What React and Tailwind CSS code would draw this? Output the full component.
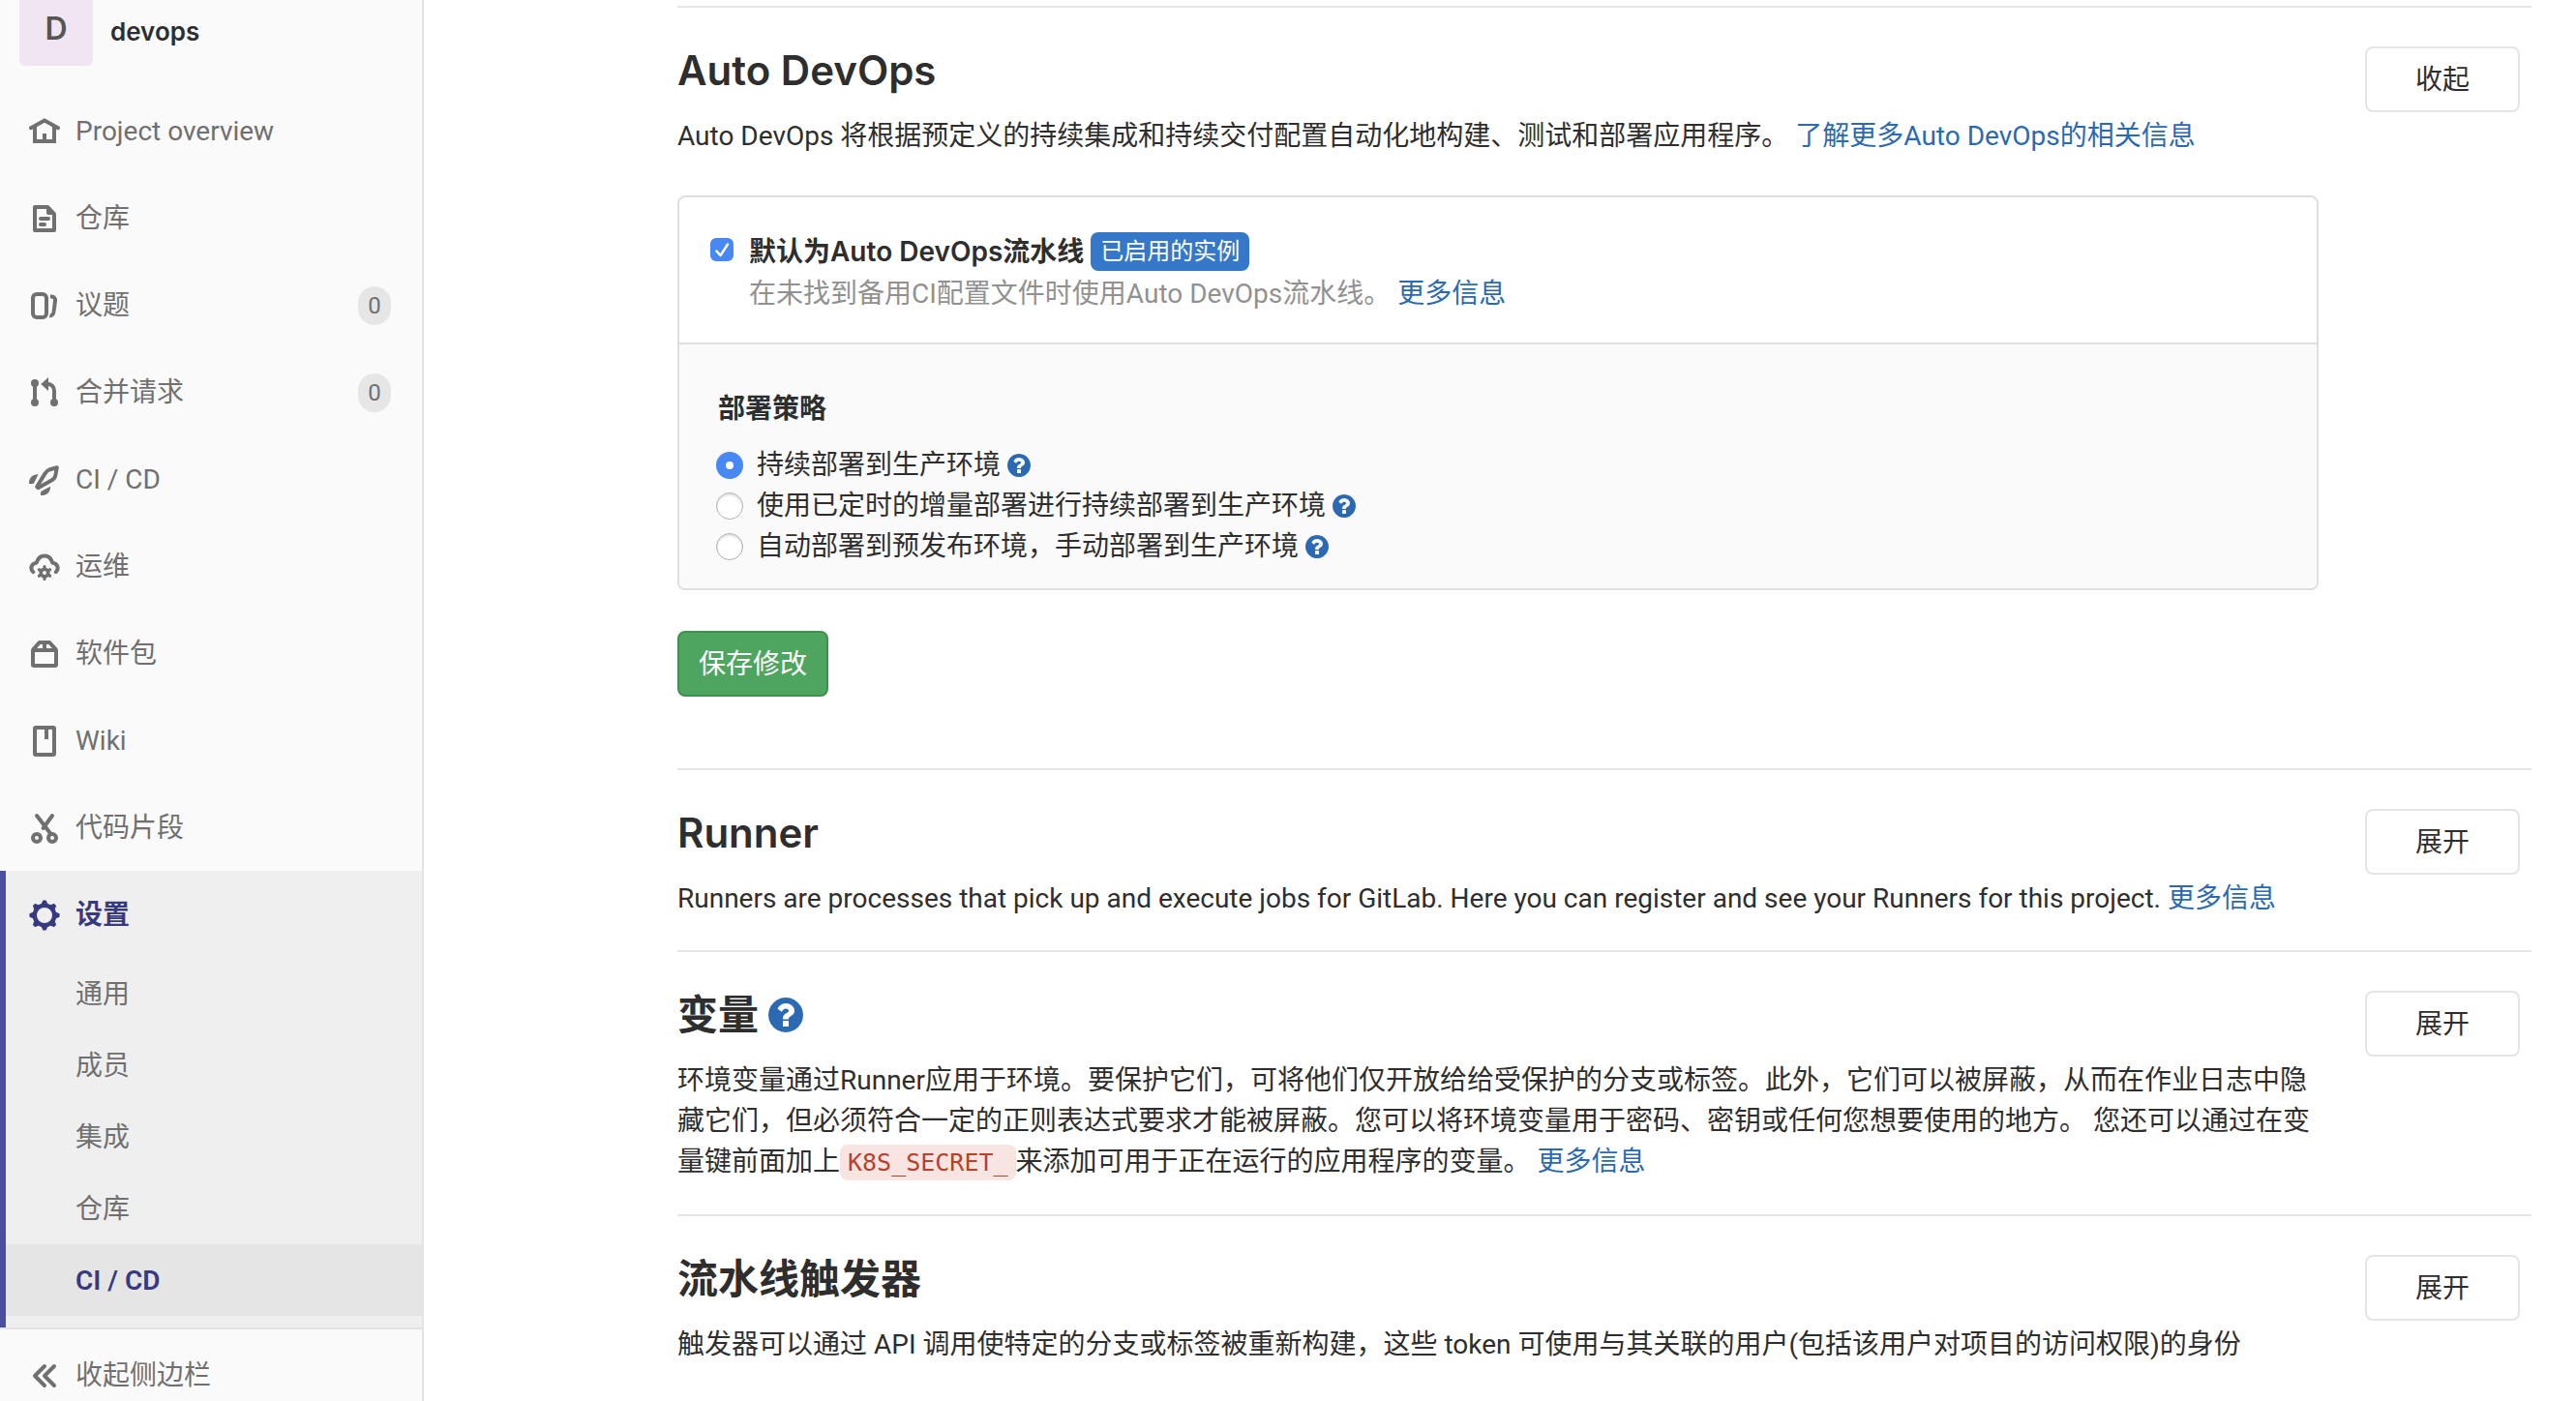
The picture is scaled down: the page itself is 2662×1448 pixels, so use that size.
import React, { useState } from "react";

const LINK = "text-[#2c69b3] hover:underline";

function Icon({ children, size = "size-8" }) {
  return (
    <svg
      viewBox="0 0 16 16"
      className={`${size} shrink-0`}
      fill="none"
      stroke="currentColor"
      strokeWidth="2"
      aria-hidden="true"
    >
      {children}
    </svg>
  );
}

const HomeIcon = () => (
  <Icon>
    <path d="M1 6.1 8 2.3l7 3.8" strokeLinecap="round" />
    <path d="M3 5.5V13h10V5.5" />
    <path d="M8 9v3.5" />
  </Icon>
);

const DocIcon = () => (
  <Icon>
    <path
      fill="currentColor"
      stroke="none"
      fillRule="evenodd"
      d="M3 1h6.6c.3 0 .5.1.7.3l3.4 3.6c.2.2.3.4.3.7V14a1 1 0 0 1-1 1H3a1 1 0 0 1-1-1V2a1 1 0 0 1 1-1zm1 2v10h8V6h-2a1 1 0 0 1-1-1V3z"
    />
    <path d="M6 8h4M6 11h2" strokeLinecap="round" />
  </Icon>
);

const IssuesIcon = () => (
  <Icon>
    <rect x="2" y="2" width="7" height="12" rx="2" />
    <path
      fill="currentColor"
      stroke="none"
      d="M11 2.200h.6a3 3 0 0 1 2.900 3.400l-.8 5.800a3 3 0 0 1-3 2.700h-.3l.6-2a1 1 0 0 0 .8-.9l.7-5.700a1 1 0 0 0-1-1.200H11z"
    />
  </Icon>
);

const MergeIcon = () => (
  <Icon>
    <path d="M3 3v10M9.500 3.500c2.200 0 3.500 1.300 3.500 3.500v6" />
    <g fill="currentColor" stroke="none">
      <circle cx="3" cy="3" r="2" />
      <circle cx="3" cy="13" r="2" />
      <circle cx="13" cy="13" r="2" />
      <path d="M6.100 3.500 10 0v7z" />
    </g>
  </Icon>
);

const RocketIcon = () => (
  <Icon>
    <path
      d="M14.400 1.600l-.7 3.900c-.2 1.200-1 2.200-2.100 2.800L4.700 12.100l-.6-.6L8.200 4.800c.6-1 1.500-1.800 2.600-2.200z"
      strokeLinejoin="round"
    />
    <g fill="currentColor" stroke="none">
      <path d="M0 10c-.1-2.900 1.600-5 4.800-4.900L2.700 9.400c-.2.400-.5.600-.9.600z" />
      <path d="M6 16c2.900.1 5.100-1.300 5-4.600l-4.400 2.300c-.4.200-.6.500-.6.900z" />
    </g>
  </Icon>
);

const CloudGearIcon = () => (
  <Icon>
    <path
      d="M2.100 10.600C.6 9.100.8 6.300 3.900 5.800 4.500 3.500 6 2.200 8 2.200s3.500 1.300 4.100 3.600c3.100.5 3.300 3.300 1.800 4.800"
      strokeLinecap="round"
      strokeLinejoin="round"
    />
    <circle cx="8" cy="11" r="1.900" strokeWidth="1.800" />
    <path
      d="M8 8.300v-.5M8 14.200v-.5M10.300 9.700l.5-.3M5.200 12.600l.5-.3M10.300 12.300l.5.3M5.200 9.400l.5.3"
      strokeWidth="1.600"
      strokeLinecap="round"
    />
  </Icon>
);

const PackageIcon = () => (
  <Icon>
    <path d="M2 6h12v7.500a.5.5 0 0 1-.5.5h-11a.5.5 0 0 1-.5-.5z" strokeLinejoin="round" />
    <path d="M2 5.800 5.400 2h5.200L14 5.800" strokeLinejoin="round" />
    <path d="M8 2v4" />
  </Icon>
);

const WikiIcon = () => (
  <Icon>
    <rect x="3" y="1" width="10" height="14" rx="0.500" />
    <path d="M9 2v5" />
  </Icon>
);

const ScissorsIcon = () => (
  <Icon>
    <path d="M4 1.500 11.300 11M12 1.500 7.300 8" strokeLinecap="round" />
    <circle cx="4" cy="13" r="2" />
    <circle cx="12" cy="13" r="2" />
  </Icon>
);

const SettingsIcon = () => (
  <Icon>
    <circle cx="8" cy="8" r="5.100" strokeWidth="2.200" />
    {[0, 45, 90, 135, 180, 225, 270, 315].map((a) => (
      <path
        key={a}
        d="M7.500.7h1l1 2.500h-3z"
        transform={`rotate(${a} 8 8)`}
        fill="currentColor"
        strokeWidth="1"
        strokeLinejoin="round"
      />
    ))}
  </Icon>
);

const ChevronsIcon = () => (
  <Icon>
    <path d="M8 3 3 8l5 5M13 3 8 8l5 5" strokeLinecap="round" strokeLinejoin="round" />
  </Icon>
);

function Help({ size = "size-6" }) {
  return (
    <a href="#help" aria-label="帮助" className="shrink-0 text-[#2c69b3]">
      <svg viewBox="128 128 1536 1536" className={size} fill="currentColor" aria-hidden="true">
        <path d="M1024 1376v-192q0-14-9-23t-23-9h-192q-14 0-23 9t-9 23v192q0 14 9 23t23 9h192q14 0 23-9t9-23zm256-672q0-88-55.500-163t-138.500-116-170-41q-243 0-371 213-15 24 8 42l132 100q7 6 19 6 16 0 25-12 53-68 86-92 34-24 86-24 48 0 85.500 26t37.500 59q0 38-20 61t-68 45q-63 28-115.500 86.500t-52.500 125.500v36q0 14 9 23t23 9h192q14 0 23-9t9-23q0-19 21.500-49.500t54.500-49.500q32-18 49-28.500t46-35 44.500-48 28-60.500 12.500-81zm384 192q0 209-103 385.500t-279.500 279.500-385.500 103-385.500-103-279.500-279.500-103-385.500 103-385.500 279.500-279.500 385.500-103 385.500 103 279.500 279.500 103 385.500z" />
      </svg>
    </a>
  );
}

const NAV = [
  { label: "Project overview", icon: HomeIcon },
  { label: "仓库", icon: DocIcon },
  { label: "议题", icon: IssuesIcon, count: 0 },
  { label: "合并请求", icon: MergeIcon, count: 0 },
  { label: "CI / CD", icon: RocketIcon },
  { label: "运维", icon: CloudGearIcon },
  { label: "软件包", icon: PackageIcon },
  { label: "Wiki", icon: WikiIcon },
  { label: "代码片段", icon: ScissorsIcon },
];

const SUBNAV = ["通用", "成员", "集成", "仓库", "CI / CD"];

function Sidebar() {
  return (
    <aside className="flex w-[438px] shrink-0 flex-col border-r-2 border-[#e3e3e3] bg-[#fafafa] text-[#707070]">
      <a href="#project" className="flex h-[90px] shrink-0 items-start gap-[18px] pl-5 font-['Inter','Noto_Sans_CJK_SC',sans-serif]">
        <span className="flex h-[68px] w-[76px] items-center justify-center rounded-b-md bg-[#f1e5f4] pb-2 text-[32px] font-semibold text-[#555555]">
          D
        </span>
        <span className="py-3 font-semibold text-[#2e2e2e] text-[26px] leading-[42px]">devops</span>
      </a>
      <nav className="shrink-0">
        <ul>
          {NAV.map(({ label, icon: Glyph, count }) => (
            <li key={label}>
              <a href="#nav" className="flex h-[90px] items-center gap-4 pt-0.5 pr-8 pl-[30px]">
                <Glyph />
                <span className="flex-1">{label}</span>
                {count !== undefined && (
                  <span className="flex h-10 w-[34px] items-center justify-center rounded-[17px] bg-[#e6e6e6] text-[24px]">
                    {count}
                  </span>
                )}
              </a>
            </li>
          ))}
          <li className="border-l-[6px] border-[#4a4e9e] bg-[#efefef] pb-3">
            <a
              href="#settings"
              className="flex h-[90px] items-center gap-4 pt-0.5 pl-6 font-semibold text-[#373a80]"
            >
              <SettingsIcon />
              <span>设置</span>
            </a>
            <ul>
              {SUBNAV.map((label) => (
                <li key={label}>
                  <a
                    href="#sub"
                    className={
                      label === "CI / CD"
                        ? "flex h-[74px] items-center bg-[#e5e5e5] pt-0.5 pl-[72px] font-semibold text-[#373a80]"
                        : "flex h-[74px] items-center pt-0.5 pl-[72px]"
                    }
                  >
                    {label}
                  </a>
                </li>
              ))}
            </ul>
          </li>
        </ul>
      </nav>
      <button
        type="button"
        className="flex h-[98px] shrink-0 items-center gap-4 border-t-2 border-[#e3e3e3] pl-[30px]"
      >
        <ChevronsIcon />
        <span>收起侧边栏</span>
      </button>
    </aside>
  );
}

function Section({ title, action, description, children }) {
  return (
    <section className="flex items-start gap-12 border-t-2 border-[#e5e5e5] pt-10 pr-3 pb-8">
      <div className="min-w-0 flex-1">
        <h4 className="mb-[22px] flex items-center gap-2.5 font-['Inter','Noto_Sans_CJK_SC',sans-serif] text-[42px] leading-[50px] font-semibold">
          {title}
        </h4>
        <p>{description}</p>
        {children}
      </div>
      <button
        type="button"
        className="h-[68px] w-40 shrink-0 rounded-lg border-2 border-[#e5e5e5] bg-white pt-0.5"
      >
        {action}
      </button>
    </section>
  );
}

const STRATEGIES = [
  "持续部署到生产环境",
  "使用已定时的增量部署进行持续部署到生产环境",
  "自动部署到预发布环境，手动部署到生产环境",
];

function AutoDevOpsForm() {
  const [enabled, setEnabled] = useState(true);
  const [strategy, setStrategy] = useState(0);
  return (
    <form className="pt-10 pb-[42px]" onSubmit={(e) => e.preventDefault()}>
      <div className="mb-[42px] overflow-hidden rounded-lg border-2 border-[#dfdfdf]">
        <div className="flex gap-4 px-8 pt-[34px] pb-7 leading-[44px]">
          <span className="mt-2 grid size-6 shrink-0">
            <input
              id="auto-devops"
              type="checkbox"
              checked={enabled}
              onChange={(e) => setEnabled(e.target.checked)}
              className="col-start-1 row-start-1 size-6 appearance-none rounded-md border-2 border-[#b5b5b5] bg-white checked:border-[#4788f4] checked:bg-[#4788f4]"
            />
            {enabled && (
              <svg
                viewBox="0 0 24 24"
                className="pointer-events-none col-start-1 row-start-1 size-6"
                fill="none"
                stroke="white"
                strokeWidth="2.500"
                strokeLinecap="round"
                strokeLinejoin="round"
                aria-hidden="true"
              >
                <path d="M6.500 13.500l4 4.500L18 6.500" />
              </svg>
            )}
          </span>
          <div>
            <div className="flex h-11 items-center gap-[7px]">
              <label
                htmlFor="auto-devops"
                className="font-['Inter','Noto_Sans_CJK_SC',sans-serif] font-semibold"
              >
                默认为Auto DevOps流水线
              </label>
              <span className="flex h-10 items-center rounded-lg bg-[#3578c9] px-2.5 text-[24px] text-white">
                已启用的实例
              </span>
            </div>
            <div className="text-[#919191]">
              在未找到备用CI配置文件时使用Auto DevOps流水线。{" "}
              <a href="#more" className={LINK}>
                更多信息
              </a>
            </div>
          </div>
        </div>
        <fieldset className="border-t-2 border-[#dfdfdf] bg-[#fafafa] px-[38px] pt-[46px] pb-[22px]">
          <div className="mb-4 px-0.5 font-semibold">部署策略</div>
          {STRATEGIES.map((text, i) => (
            <div key={text} className="flex items-center">
              <input
                id={`strategy-${i}`}
                type="radio"
                name="strategy"
                checked={strategy === i}
                onChange={() => setStrategy(i)}
                className="mr-3.5 size-7 shrink-0 appearance-none rounded-full border border-[#b0b0b0] bg-white shadow-[inset_0_2px_2px_rgba(0,0,0,0.12)] checked:border-[10px] checked:border-[#4788f4] checked:shadow-none"
              />
              <label htmlFor={`strategy-${i}`} className="mr-[7px]">
                {text}
              </label>
              <Help />
            </div>
          ))}
        </fieldset>
      </div>
      <button
        type="submit"
        className="h-[68px] rounded-lg border-2 border-[#3f8f4f] bg-[#4ea55f] px-5 pt-0.5 text-white"
      >
        保存修改
      </button>
    </form>
  );
}

export default function App() {
  return (
    <div
      lang="zh-CN"
      className="flex h-screen overflow-hidden bg-white font-['Roboto','Noto_Sans_CJK_SC',sans-serif] text-[28px] leading-[42px] text-[#2e2e2e]"
    >
      <Sidebar />
      <main className="min-w-0 flex-1 pt-1.5 pr-[46px] pl-[262px]">
        <Section
          title="Auto DevOps"
          action="收起"
          description={
            <>
              Auto DevOps 将根据预定义的持续集成和持续交付配置自动化地构建、测试和部署应用程序。{" "}
              <a href="#more" className={LINK}>
                了解更多Auto DevOps的相关信息
              </a>
            </>
          }
        >
          <AutoDevOpsForm />
        </Section>
        <Section
          title="Runner"
          action="展开"
          description={
            <>
              Runners are processes that pick up and execute jobs for GitLab. Here you can register and see your
              Runners for this project.{" "}
              <a href="#more" className={LINK}>
                更多信息
              </a>
            </>
          }
        />
        <Section
          title={
            <>
              变量
              <Help size="size-9" />
            </>
          }
          action="展开"
          description={
            <>
              环境变量通过Runner应用于环境。要保护它们，可将他们仅开放给给受保护的分支或标签。此外，它们可以被屏蔽，从而在作业日志中隐藏它们，但必须符合一定的正则表达式要求才能被屏蔽。您可以将环境变量用于密码、密钥或任何您想要使用的地方。
              您还可以通过在变量键前面加上
              <code className="rounded-lg bg-[#f8e5e1] px-2 py-1 font-['DejaVu_Sans_Mono',monospace] text-[25px] text-[#b9402a]">
                K8S_SECRET_
              </code>
              来添加可用于正在运行的应用程序的变量。{" "}
              <a href="#more" className={LINK}>
                更多信息
              </a>
            </>
          }
        />
        <Section
          title="流水线触发器"
          action="展开"
          description="触发器可以通过 API 调用使特定的分支或标签被重新构建，这些 token 可使用与其关联的用户(包括该用户对项目的访问权限)的身份"
        />
      </main>
    </div>
  );
}
